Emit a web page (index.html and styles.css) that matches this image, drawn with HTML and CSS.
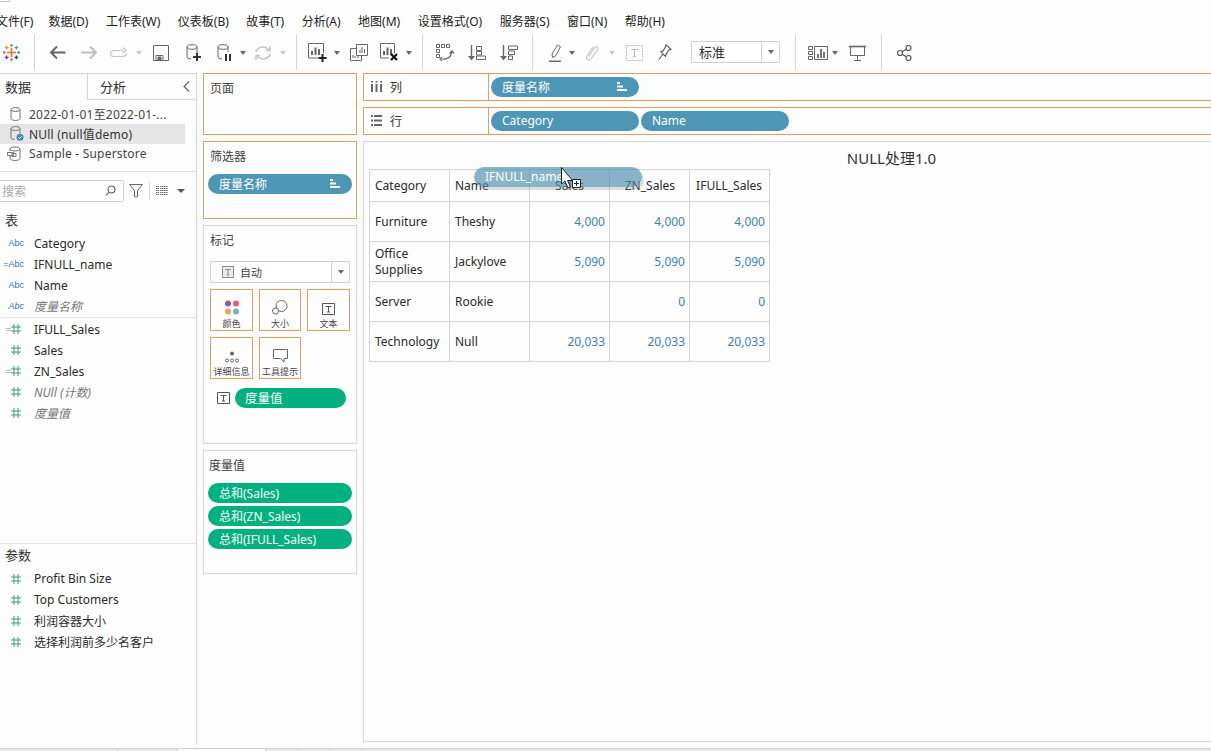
FILE: index.html
```html
<!DOCTYPE html>
<html lang="zh">
<head>
<meta charset="utf-8">
<title>Tableau</title>
<link rel="stylesheet" href="styles.css">
</head>
<body>
<div class="app">
  <div class="titlebar"><span class="corner"></span></div>
  <nav class="menu">
    <span class="m1">文件(F)</span><span>数据(D)</span><span>工作表(W)</span><span>仪表板(B)</span><span>故事(T)</span><span>分析(A)</span><span>地图(M)</span><span>设置格式(O)</span><span>服务器(S)</span><span>窗口(N)</span><span>帮助(H)</span>
  </nav>
  <div class="toolbar">
    <svg class="ico" width="17" height="17" viewBox="0 0 16 16" fill="none" stroke-width="1.3">
      <path d="M8 3.5v9M3.7 8h8.6" stroke="#e8762d" stroke-width="1.6"/>
      <path d="M8 0v2.6M6.8 1.3h2.4" stroke="#5b8fa8"/>
      <path d="M8 13.4V16M6.8 14.7h2.4" stroke="#5b8fa8"/>
      <path d="M0 8h2.6M1.3 6.8v2.4" stroke="#5b8fa8"/>
      <path d="M13.4 8H16M14.7 6.8v2.4" stroke="#59879b"/>
      <path d="M3.4 1.6v3.6M1.6 3.4h3.6" stroke="#eb912b"/>
      <path d="M12.6 1.6v3.6M10.8 3.4h3.6" stroke="#59a5a0"/>
      <path d="M3.4 10.8v3.6M1.6 12.6h3.6" stroke="#c72037"/>
      <path d="M12.6 10.8v3.6M10.8 12.6h3.6" stroke="#1f447a"/>
    </svg>
    <i class="sep"></i>
    <svg class="ico" width="17" height="15" viewBox="0 0 17 15" fill="none" stroke="#666" stroke-width="2"><path d="M16.5 7.5H2M8 1.5l-6 6 6 6"/></svg>
    <svg class="ico" width="17" height="15" viewBox="0 0 17 15" fill="none" stroke="#bdbdbd" stroke-width="2"><path d="M0 7.5h14.5M9 1.5l6 6-6 6"/></svg>
    <svg class="ico" width="19" height="12" viewBox="0 0 19 12" fill="none" stroke="#c4c4c4" stroke-width="1.2"><path d="M13 3.5H3.5a3 3 0 0 0 0 6H13a3 3 0 0 0 3-3M12.5 .5l3.5 3-3.500 2.500"/></svg>
    <i class="caret off"></i>
    <svg class="ico" width="16" height="16" viewBox="0 0 16 16" fill="none" stroke="#666"><path d="M.5.500h15v15H.5zM3 15v-4.500h7V15"/><path d="M5 12h3v3H5z" fill="#666"/></svg>
    <svg class="ico" width="16" height="18" viewBox="0 0 16 18" fill="none" stroke="#666"><ellipse cx="6" cy="3" rx="5" ry="2.300"/><path d="M1 3v10q0 2 4 2M11 3v6"/><path d="M11 9v8M7 13h8" stroke="#333" stroke-width="2"/></svg>
    <svg class="ico" width="16" height="18" viewBox="0 0 16 18" fill="none" stroke="#666"><ellipse cx="6" cy="3" rx="5" ry="2.300"/><path d="M1 3v10q0 2 4 2M11 3v5"/><path d="M9 10v7M13 10v7" stroke="#333" stroke-width="2"/></svg>
    <i class="caret"></i>
    <svg class="ico" width="18" height="16" viewBox="0 0 18 16" fill="none" stroke="#c4c4c4" stroke-width="1.500"><path d="M2 7a7 6 0 0 1 12-3l2 1.500M16 9a7 6 0 0 1-12 3l-2-1.500"/><path d="M16 1v4.500h-4M2 15v-4.500h4"/></svg>
    <i class="caret off"></i>
    <i class="sep"></i>
    <svg class="ico" width="19" height="19" viewBox="0 0 19 19" fill="none" stroke="#666"><path d="M10 15H.5V.5h15V10"/><path d="M4 12V8M7.500 12V4.500M11 12V6" stroke-width="2"/><path d="M14.500 11v8M10.500 15h8" stroke="#222" stroke-width="2"/></svg>
    <i class="caret"></i>
    <svg class="ico" width="18" height="17" viewBox="0 0 18 17" fill="none" stroke="#666"><path d="M6.500 4.500H.5v12h11V12"/><path d="M6.500.5h11v11h-11z"/><path d="M10 9V6M12 9V3M14.500 9V5M3 14v-3M5 14v-2M8 14v-2"/></svg>
    <svg class="ico" width="18" height="19" viewBox="0 0 18 19" fill="none" stroke="#666"><path d="M9 15H.5V.5h14V10"/><path d="M4 12V8M7.500 12V4.500M11 12V6" stroke-width="2"/><path d="M11 11l6 6M17 11l-6 6" stroke="#111" stroke-width="2.200"/></svg>
    <i class="caret"></i>
    <i class="sep"></i>
    <svg class="ico" width="18" height="17" viewBox="0 0 18 17" fill="none" stroke="#666"><path d="M.5.500h3v3h-3zM5.500.500h3v3h-3zM10.500.500h3v3h-3zM.500 5.500h3v3h-3zM.500 10.500h3v3h-3z"/><path d="M6 15q8 1 10-7M13.500 9.500L16 7l2 2.500M6 13l-2 2 2 2" stroke-width="1.200"/></svg>
    <svg class="ico" width="18" height="16" viewBox="0 0 18 16" fill="none" stroke="#666"><path d="M3.500 0v13" stroke-width="1.400"/><path d="M0 11l3.500 4.500L7 11z" fill="#666" stroke="none"/><path d="M8.500 1.500h5v4h-5zM8.500 6.500h5v3.500h-5zM8.500 11h9v3.500h-9z"/></svg>
    <svg class="ico" width="18" height="16" viewBox="0 0 18 16" fill="none" stroke="#666"><path d="M3.500 0v13" stroke-width="1.400"/><path d="M0 11l3.500 4.500L7 11z" fill="#666" stroke="none"/><path d="M8.500 1h9v3.500h-9zM8.500 6h6v3.500h-6zM8.500 11h4v3.500h-4z"/></svg>
    <i class="sep"></i>
    <svg class="ico" width="14" height="18" viewBox="0 0 14 18" fill="none" stroke="#666"><path d="M3 10L8.500 1l3 1.800-5 9.200-3 1.500z"/><path d="M0 17.300h12" stroke-width="1.500"/></svg>
    <i class="caret"></i>
    <svg class="ico" width="13" height="18" viewBox="0 0 13 18" fill="none" stroke="#c4c4c4" stroke-width="1.200"><path d="M3 12l6-9a2 2 0 0 1 3 2L5 15a2.500 2.500 0 0 1-4-3l6-9"/></svg>
    <i class="caret off"></i>
    <svg class="ico" width="17" height="16" viewBox="0 0 17 16" fill="none" stroke="#bbb"><path d="M.5.500h16v15H.5z" stroke-dasharray="2 1"/><path d="M5 4.500h7M8.500 4.500v7M7 11.500h3"/></svg>
    <svg class="ico" width="14" height="17" viewBox="0 0 14 17" fill="none" stroke="#555" stroke-width="1.100"><path d="M8 .8l5 4.500-2.500 1L8 10.500l-.5 2L2.800 7.800 5 7l2.200-3.800zM5 10l-4 5.500"/></svg>
    <div class="combo tb-combo"><span>标准</span><b><i class="caret big"></i></b></div>
    <i class="sep"></i>
    <svg class="ico" width="20" height="14" viewBox="0 0 20 14" fill="none" stroke="#666"><path d="M.5.500h4v3h-4zM.500 5.500h4v3h-4zM.500 10.500h4v3h-4zM6.500.500h13v13h-13z"/><path d="M10 12V8M13 12V3M16 12V6" stroke-width="1.800"/></svg>
    <i class="caret"></i>
    <svg class="ico" width="17" height="16" viewBox="0 0 17 16" fill="none" stroke="#666"><path d="M0 1.500h17" stroke-width="1.600"/><path d="M1.500 2v8.500h14V2M8.500 10.500V15M5 15.500h7"/></svg>
    <i class="sep"></i>
    <svg class="ico" width="15" height="16" viewBox="0 0 15 16" fill="none" stroke="#555" stroke-width="1.200"><circle cx="11.500" cy="3" r="2.500"/><circle cx="3" cy="8" r="2.500"/><circle cx="11.500" cy="13" r="2.500"/><path d="M5.200 6.800L9.300 4.300M5.200 9.200l4.100 2.500"/></svg>
  </div>

  <main class="work">
    <aside class="left">
      <div class="tabs">
        <span class="tab active">数据</span>
        <span class="tab">分析</span>
        <span class="collapse"><svg width="7" height="11" viewBox="0 0 7 11" fill="none" stroke="#666" stroke-width="1.200"><path d="M6 .5l-5 5 5 5"/></svg></span>
      </div>
      <div class="sources">
        <div class="src"><svg class="dbi" width="11" height="14" viewBox="0 0 11 14" fill="none" stroke="#777"><ellipse cx="5.500" cy="2.500" rx="4.500" ry="2"/><path d="M1 2.500v9q0 2 4.500 2t4.500-2v-9"/></svg><span>2022-01-01至2022-01-...</span></div>
        <div class="src current"><svg class="dbi" width="14" height="15" viewBox="0 0 14 15" fill="none" stroke="#777"><ellipse cx="5.500" cy="2.500" rx="4.500" ry="2"/><path d="M1 2.500v9q0 2 3.500 2M10 2.500v5"/><circle cx="10" cy="11.300" r="3.500" fill="#3f8cb3" stroke="none"/><path d="M8.300 11.300l1.300 1.300 2-2.300" stroke="#fff"/></svg><span>NUll (null值demo)</span></div>
        <div class="src"><svg class="dbi" width="14" height="15" viewBox="0 0 14 15" fill="none" stroke="#777"><ellipse cx="8" cy="3" rx="5" ry="2"/><path d="M13 3v9.500q0 2-5 2t-5-2V10M3 3v2"/><path d="M.5 6.500h6v3h-6zM5 7.500h4v3H5z"/></svg><span>Sample - Superstore</span></div>
      </div>
      <div class="searchrow">
        <div class="search"><span>搜索</span><svg width="11" height="11" viewBox="0 0 11 11" fill="none" stroke="#555" stroke-width="1.100"><circle cx="6.500" cy="4.500" r="3.500"/><path d="M4 7l-3 3.500"/></svg></div>
        <svg class="funnel" width="14" height="13" viewBox="0 0 14 13" fill="none" stroke="#666"><path d="M.5.500h13L8.500 6.500V12.500h-3V6.500z"/></svg>
        <i class="vline"></i>
        <svg class="grid-ico" width="12" height="9" viewBox="0 0 12 9" fill="none" stroke="#666"><path d="M0 .5h3M0 2.500h3M0 4.500h3M0 6.500h3M0 8.500h3M4 .5h8M4 2.500h8M4 4.500h8M4 6.500h8M4 8.500h8" stroke-dasharray="1.500 .5"/></svg>
        <i class="caret dark"></i>
      </div>
      <div class="sect">表</div>
      <div class="fields dims">
        <div class="field"><span class="ic abc">Abc</span><span>Category</span></div>
        <div class="field"><span class="ic abc">=Abc</span><span>IFNULL_name</span></div>
        <div class="field"><span class="ic abc">Abc</span><span>Name</span></div>
        <div class="field gen"><span class="ic abc">Abc</span><span>度量名称</span></div>
      </div>
      <div class="fields measures">
        <div class="field"><span class="ic num">=<svg class="hash" width="10" height="10" viewBox="0 0 10 10" fill="none" stroke="#3e9a78"><path d="M3 0v10M7 0v10M0 3h10M0 7h10"/></svg></span><span>IFULL_Sales</span></div>
        <div class="field"><span class="ic num"><svg class="hash" width="10" height="10" viewBox="0 0 10 10" fill="none" stroke="#3e9a78"><path d="M3 0v10M7 0v10M0 3h10M0 7h10"/></svg></span><span>Sales</span></div>
        <div class="field"><span class="ic num">=<svg class="hash" width="10" height="10" viewBox="0 0 10 10" fill="none" stroke="#3e9a78"><path d="M3 0v10M7 0v10M0 3h10M0 7h10"/></svg></span><span>ZN_Sales</span></div>
        <div class="field gen"><span class="ic num"><svg class="hash" width="10" height="10" viewBox="0 0 10 10" fill="none" stroke="#3e9a78"><path d="M3 0v10M7 0v10M0 3h10M0 7h10"/></svg></span><span>NUll (计数)</span></div>
        <div class="field gen"><span class="ic num"><svg class="hash" width="10" height="10" viewBox="0 0 10 10" fill="none" stroke="#3e9a78"><path d="M3 0v10M7 0v10M0 3h10M0 7h10"/></svg></span><span>度量值</span></div>
      </div>
      <div class="params">
        <div class="sect">参数</div>
        <div class="fields">
          <div class="field"><span class="ic num"><svg class="hash" width="10" height="10" viewBox="0 0 10 10" fill="none" stroke="#3e9a78"><path d="M3 0v10M7 0v10M0 3h10M0 7h10"/></svg></span><span>Profit Bin Size</span></div>
          <div class="field"><span class="ic num"><svg class="hash" width="10" height="10" viewBox="0 0 10 10" fill="none" stroke="#3e9a78"><path d="M3 0v10M7 0v10M0 3h10M0 7h10"/></svg></span><span>Top Customers</span></div>
          <div class="field"><span class="ic num"><svg class="hash" width="10" height="10" viewBox="0 0 10 10" fill="none" stroke="#3e9a78"><path d="M3 0v10M7 0v10M0 3h10M0 7h10"/></svg></span><span>利润容器大小</span></div>
          <div class="field"><span class="ic num"><svg class="hash" width="10" height="10" viewBox="0 0 10 10" fill="none" stroke="#3e9a78"><path d="M3 0v10M7 0v10M0 3h10M0 7h10"/></svg></span><span>选择利润前多少名客户</span></div>
        </div>
      </div>
    </aside>

    <section class="cards">
      <div class="card orange pages"><h3>页面</h3></div>
      <div class="card orange filters">
        <h3>筛选器</h3>
        <div class="pill blue"><span>度量名称</span><svg width="10" height="9" viewBox="0 0 10 9" fill="#fff"><path d="M0 0h3v2H0zM0 3.500h6v2H0zM0 7h10v2H0z"/></svg></div>
      </div>
      <div class="card marks">
        <h3>标记</h3>
        <div class="combo marks-combo">
          <span class="mc-label"><svg width="12" height="12" viewBox="0 0 12 12" fill="#eee" stroke="#888"><path d="M.5.500h11v11H.5z"/><path d="M3 3.500h6M6 3.500v5.500M4.500 9h3" fill="none"/></svg>自动</span><b><i class="caret big"></i></b>
        </div>
        <div class="markgrid">
          <div class="mbtn"><svg width="16" height="15" viewBox="0 0 16 15"><circle cx="4" cy="3.500" r="3" fill="#8d5b93"/><circle cx="12" cy="3.500" r="3" fill="#ea5f6d"/><circle cx="4" cy="11.500" r="3" fill="#eda75c"/><circle cx="12" cy="11.500" r="3" fill="#76aec4"/></svg><span>颜色</span></div>
          <div class="mbtn"><svg width="16" height="15" viewBox="0 0 16 15" fill="#fff" stroke="#666"><circle cx="9.500" cy="6" r="5.500"/><circle cx="3.500" cy="11" r="3"/></svg><span>大小</span></div>
          <div class="mbtn"><svg width="13" height="12" viewBox="0 0 13 12" fill="none" stroke="#555"><path d="M.5.500h12v11H.5z"/><path d="M3.500 3.500h6M6.500 3.500v5.500M5 9h3"/></svg><span>文本</span></div>
          <div class="mbtn"><svg width="14" height="12" viewBox="0 0 14 12" fill="none" stroke="#666"><circle cx="7" cy="2.500" r="2" fill="#666" stroke="none"/><circle cx="2" cy="9.500" r="1.500"/><circle cx="7" cy="9.500" r="1.500"/><circle cx="12" cy="9.500" r="1.500"/></svg><span>详细信息</span></div>
          <div class="mbtn"><svg width="15" height="14" viewBox="0 0 15 14" fill="none" stroke="#666"><path d="M.5.500h14v9h-3.500V13L7.500 9.500H.5z"/></svg><span>工具提示</span></div>
        </div>
        <div class="markpill">
          <svg width="13" height="12" viewBox="0 0 13 12" fill="none" stroke="#555"><path d="M.5.500h12v11H.5z"/><path d="M3.500 3.500h6M6.500 3.500v5.500M5 9h3"/></svg>
          <div class="pill green"><span>度量值</span></div>
        </div>
      </div>
      <div class="card values">
        <h3>度量值</h3>
        <div class="pill green"><span>总和(Sales)</span></div>
        <div class="pill green"><span>总和(ZN_Sales)</span></div>
        <div class="pill green"><span>总和(IFULL_Sales)</span></div>
      </div>
    </section>

    <section class="view">
      <div class="shelf">
        <div class="shelf-label"><svg width="11" height="11" viewBox="0 0 11 11" fill="#666"><path d="M0 3h2v8H0zM4.500 3h2v8h-2zM9 3h2v8H9zM0 0h2v1.500H0zM4.500 0h2v1.500h-2zM9 0h2v1.500H9z"/></svg><span>列</span></div>
        <div class="shelf-pills"><div class="pill blue"><span>度量名称</span><svg width="10" height="9" viewBox="0 0 10 9" fill="#fff"><path d="M0 0h3v2H0zM0 3.500h6v2H0zM0 7h10v2H0z"/></svg></div></div>
      </div>
      <div class="shelf">
        <div class="shelf-label"><svg width="11" height="11" viewBox="0 0 11 11" fill="#666"><path d="M0 0h2v2H0zM3 0h8v2H3zM0 4.500h2v2H0zM3 4.500h8v2H3zM0 9h2v2H0zM3 9h8v2H3z"/></svg><span>行</span></div>
        <div class="shelf-pills"><div class="pill blue"><span>Category</span></div><div class="pill blue"><span>Name</span></div></div>
      </div>
      <div class="chart">
        <div class="chart-title">NULL处理1.0</div>
        <table class="cross">
          <thead><tr><th>Category</th><th>Name</th><th class="hc h-sales">Sales</th><th class="hc h-zn">ZN_Sales</th><th class="hc">IFULL_Sales</th></tr></thead>
          <tbody>
            <tr><td>Furniture</td><td>Theshy</td><td class="n">4,000</td><td class="n">4,000</td><td class="n">4,000</td></tr>
            <tr><td class="wrap">Office Supplies</td><td>Jackylove</td><td class="n">5,090</td><td class="n">5,090</td><td class="n">5,090</td></tr>
            <tr><td>Server</td><td>Rookie</td><td class="n"></td><td class="n">0</td><td class="n">0</td></tr>
            <tr><td>Technology</td><td>Null</td><td class="n">20,033</td><td class="n">20,033</td><td class="n">20,033</td></tr>
          </tbody>
        </table>
        <div class="drag"><span>IFNULL_name</span></div>
        <svg class="cursor" width="22" height="24" viewBox="0 0 22 24"><path d="M.5.500V17L4 14l3 7 2.500-1-3-6.500h5z" fill="#fff" stroke="#222"/><path d="M11.500 12.500h8v8h-8z" fill="#fff" stroke="#222"/><path d="M15.500 14v5M13 16.500h5" stroke="#222"/></svg>
      </div>
    </section>
  </main>
  <footer class="tabsbar"><i class="seg s1"></i><i class="seg s2"></i><i class="seg cur"></i><i class="seg s3"></i><i class="seg s3"></i><i class="seg s3"></i><i class="seg rest"></i></footer>
</div>
</body>
</html>
```

FILE: styles.css
```css
* { box-sizing: border-box; }
html, body { margin: 0; height: 100%; overflow: hidden; background: #fdfdfd; }
body { font-family: "Noto Sans", "Noto Sans CJK SC", sans-serif; font-size: 12px; color: #2e2e2e; }
.app { width: 1211px; height: 751px; display: flex; flex-direction: column; overflow: hidden; }
i { font-style: normal; display: block; }

.titlebar { height: 12px; }
.corner { display: block; width: 10px; height: 2px; border: 1px solid #ccc; border-top: 0; border-left: 0; }

.menu { height: 20px; display: flex; align-items: center; line-height: 18px; white-space: nowrap; color: #222; margin-left: -4px; }
.menu span { margin-right: 17.5px; }
.menu .m1 { margin-right: 15px; }

.toolbar { height: 36px; margin-top: 3px; padding-left: 3px; display: grid; align-items: center; grid-template-columns: 31px 15px 32px 29px 29px 14px 33px 31px 26px 11px 29px 13px 12px 29px 13px 30px 29px 13px 14px 32px 32px 32px 17px 23px 14px 26px 14px 32px 33px 104px 13px 27px 14px 32px 16px auto; }
.ico { display: block; }
.sep { width: 1px; height: 35px; background: #d4d4d4; }
.caret { width: 0; height: 0; border-left: 3px solid transparent; border-right: 3px solid transparent; border-top: 4px solid #666; }
.toolbar > .caret { margin-left: -3px; }
.caret.off { border-top-color: #c4c4c4; }
.caret.big { border-left-width: 3.5px; border-right-width: 3.5px; border-top-width: 4px; border-top-color: #666; }
.caret.dark { border-left-width: 4px; border-right-width: 4px; border-top-color: #555; margin-left: 9px; }

.combo { display: flex; height: 22px; border: 1px solid #cfcfcf; border-radius: 2px; align-items: stretch; background: #fff; }
.combo > span { flex: 1; display: flex; align-items: center; }
.combo b { width: 18px; border-left: 1px solid #cfcfcf; display: flex; align-items: center; justify-content: center; }
.tb-combo { width: 89px; margin-top: -2px; }
.tb-combo > span { padding-left: 7px; font-size: 13px; }

.work { height: 675px; margin-top: 2px; display: flex; align-items: stretch; }

.left { width: 197px; border-right: 1px solid #d4d4d4; display: flex; flex-direction: column; }
.tabs { height: 27px; display: flex; align-items: stretch; font-size: 13px; }
.tab { display: flex; align-items: center; width: 88px; padding-left: 12px; border-bottom: 1px solid #d4d4d4; border-left: 1px solid #d4d4d4; border-top: 1px solid #d4d4d4; }
.tab.active { width: 87px; padding-left: 5px; border-left: 0; border-bottom: 0; border-right: 0; }
.collapse { flex: 1; display: flex; align-items: center; padding-left: 8px; border-bottom: 1px solid #d4d4d4; border-top: 1px solid #d4d4d4; }

.sources { padding-top: 4px; height: 72px; border-bottom: 1px solid #e2e2e2; color: #444; letter-spacing: .2px; }
.src { height: 20px; width: 185px; display: flex; align-items: center; white-space: nowrap; padding-left: 10px; }
.src.current { background: #e5e5e5; color: #333; }
.dbi { flex: none; margin-right: 8px; }
.src:last-child .dbi { margin-left: -3px; }
.src.current .dbi { margin-right: 5px; }

.searchrow { height: 22px; margin-top: 8px; display: flex; align-items: center; }
.search { width: 128px; height: 22px; margin-left: -4px; border: 1px solid #cfcfcf; border-radius: 2px; background: #fff; display: flex; align-items: center; justify-content: space-between; padding: 0 7px 0 5px; color: #a8a8a8; }
.funnel { margin-left: 5px; }
.vline { width: 1px; height: 18px; background: #dcdcdc; margin: 0 6px 0 6px; }

.sect { height: 21px; line-height: 21px; padding-left: 5px; margin-top: 8px; color: #333; font-size: 13px; }
.fields { display: flex; flex-direction: column; }
.dims { margin-top: 2px; }
.field { height: 21px; display: flex; align-items: center; white-space: nowrap; color: #2a2a2a; }
.ic { width: 24px; margin-right: 10px; flex: none; font-family: "Liberation Sans", sans-serif; font-size: 9px; color: #3f7396; display: flex; justify-content: flex-end; align-items: center; }
.ic.num { padding-right: 3px; color: #3e9a78; font-size: 9px; }
.gen { font-style: italic; color: #777; }
.measures { border-top: 1px solid #e2e2e2; margin-top: 0; padding-top: 1px; }

.params { margin-top: auto; margin-bottom: 93px; border-top: 1px solid #e2e2e2; padding-top: 1px; }
.params .sect { margin-top: 0; height: 22px; line-height: 20px; }
.params .fields { margin-top: 1px; }

.cards { width: 160px; margin-left: 6px; display: flex; flex-direction: column; gap: 6px; flex: none; }
.card { width: 154px; border: 1px solid #d4d4d4; padding: 0 4px; }
.card.orange { border-color: #ee9a5f; }
.card h3 { margin: 0; padding-left: 2px; font-weight: 400; font-size: 12px; color: #444; line-height: 18px; padding-top: 6px; }
.pages { height: 62px; }
.filters { height: 78px; }
.filters .pill { margin-top: 8px; }
.marks { height: 219px; }
.values { height: 124px; }
.values h3 { padding-left: 1px; margin-bottom: 8px; }
.values .pill { margin-bottom: 3px; }

.pill { height: 20px; border-radius: 10px; display: flex; align-items: center; justify-content: space-between; padding: 0 12px 0 11px; color: #fff; white-space: nowrap; }
.blue { background: #4e96b6; }
.green { background: #00b180; }

.marks-combo { width: 140px; margin: 11px 0 6px 2px; }
.mc-label { padding-left: 11px; color: #444; font-size: 11px; }
.mc-label svg { margin-right: 6px; }
.markgrid { margin-left: 2px; width: 141px; display: grid; grid-template-columns: 43px 42px 43px; column-gap: 6px; row-gap: 6px; }
.mbtn { height: 42px; border: 1px solid #ee9a5f; display: flex; flex-direction: column; align-items: center; justify-content: flex-end; gap: 3px; font-size: 9px; line-height: 12px; color: #444; white-space: nowrap; padding-bottom: 0; }
.mbtn span { display: block; }
.markpill { display: flex; align-items: center; margin: 9px 0 0 9px; gap: 5px; }
.markpill .pill { width: 111px; font-size: 12.5px; padding-left: 10px; }

.view { flex: 1; min-width: 0; display: flex; flex-direction: column; gap: 6px; }
.shelf { height: 28px; display: flex; border: 1px solid #ee9a5f; border-right: 0; }
.shelf-label { width: 125px; border-right: 1px solid #ee9a5f; display: flex; align-items: center; padding-left: 7px; gap: 8px; color: #333; }
.shelf-pills { flex: 1; display: flex; gap: 2px; align-items: center; padding-left: 2px; }
.shelf-pills .pill { width: 148px; }

.chart { position: relative; height: 601px; border: 1px solid #d4d4d4; border-right: 0; padding: 6px 0 0 5px; }
.chart-title { font-size: 15px; line-height: 20px; height: 21px; text-align: center; padding-left: 203px; color: #333; }

.cross { border-collapse: collapse; table-layout: fixed; width: 401px; }
.cross th, .cross td { border: 1px solid #d4d4d4; padding: 0 4px 0 5px; font-weight: 400; text-align: left; line-height: 16px; color: #2a2a2a; width: 80px; white-space: nowrap; }
.cross th { height: 32px; padding-top: 2px; }
.cross td { height: 40px; padding-top: 2px; }
.cross th.hc { text-align: right; padding-right: 7px; }
.cross th.h-sales { padding-right: 25px; }
.cross th.h-zn { padding-right: 14px; }
.cross td.n { text-align: right; color: #3f7fb0; }
.cross td.wrap { white-space: normal; }

.drag { position: absolute; left: 110px; top: 25px; width: 168px; height: 20px; border-radius: 10px; background: rgba(78, 145, 175, .68); color: #fff; padding-left: 11px; line-height: 20px; box-shadow: 2px 3px 0 rgba(150, 150, 150, .3); white-space: nowrap; }
.cursor { position: absolute; left: 197px; top: 25px; }

.tabsbar { height: 3px; margin-top: 3px; display: flex; border-top: 1px solid #d0d0d0; background: #e8e8e8; }
.seg { height: 2px; border-right: 1px solid #cfcfcf; }
.s1 { width: 118px; }
.s2 { width: 60px; }
.cur { width: 88px; background: #fdfdfd; }
.s3 { width: 32px; }
.rest { flex: 1; border-right: 0; }
```
